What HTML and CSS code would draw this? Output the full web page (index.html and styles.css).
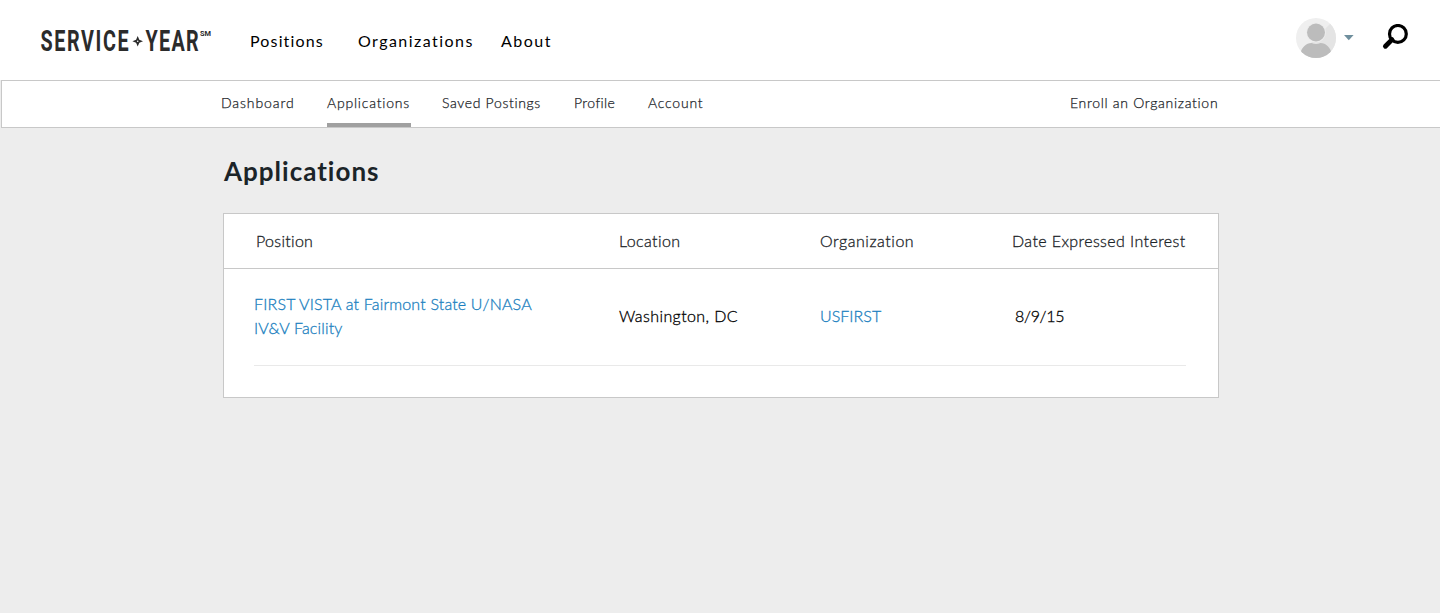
FILE: index.html
```html
<!DOCTYPE html>
<html lang="en">
<head>
<meta charset="utf-8">
<title>Applications</title>
<link rel="stylesheet" href="styles.css">
</head>
<body>
<header class="topbar">
  <a class="logo">
    <svg width="174" height="40" viewBox="0 -6 174 40">
      <g class="logo-word">
        <text transform="translate(.5 24.800) scale(.67 1)" textLength="131.500" lengthAdjust="spacing">SERVICE</text>
        <text transform="translate(105.500 24.800) scale(.67 1)" textLength="79.500" lengthAdjust="spacing">YEAR</text>
      </g>
      <path class="logo-star" fill-rule="evenodd" d="M97.700 10 L99.300 13.700 L103 15.200 L99.300 16.700 L97.700 20.400 L96.100 16.700 L92.400 15.200 L96.100 13.700 Z M97.700 14.400 A.8 .8 0 1 0 97.700 16 A.8 .8 0 1 0 97.700 14.400 Z"/>
      <text class="logo-mark" x="160" y="9.800" textLength="11" lengthAdjust="spacingAndGlyphs">SM</text>
    </svg>
  </a>
  <nav class="main-nav">
    <a class="nav-positions">Positions</a>
    <a class="nav-orgs">Organizations</a>
    <a class="nav-about">About</a>
  </nav>
  <div class="tools">
    <svg class="avatar" width="40" height="40" viewBox="0 0 40 40">
      <defs><clipPath id="disc"><circle cx="20" cy="20" r="20"/></clipPath></defs>
      <g clip-path="url(#disc)">
        <rect width="40" height="40" fill="#efefef"/>
        <path d="M40 0 V40 H0 Z" fill="#e4e4e4"/>
        <circle cx="20" cy="14.500" r="10" fill="#ededed"/>
        <circle cx="20" cy="14.500" r="9" fill="#bcbcbc"/>
        <path d="M4 36 C6 29 10 25 15.500 25 Q20 27 24.500 25 C30 25 34 29 36 36 V40 H4 Z" fill="#bcbcbc"/>
      </g>
    </svg>
    <svg class="caret" width="10" height="6" viewBox="0 0 10 6"><path d="M0 0 H9.600 L4.800 5.300 Z" fill="#6f8f9d"/></svg>
    <svg class="search" width="26" height="26" viewBox="0 0 26 26">
      <circle cx="15.900" cy="9.900" r="8.400" fill="none" stroke="#000" stroke-width="3.200"/>
      <path d="M10 15.600 L3.400 22.300" stroke="#000" stroke-width="4.800" stroke-linecap="round"/>
    </svg>
  </div>
</header>
<nav class="subbar">
  <div class="subnav">
    <a class="sub-dashboard">Dashboard</a>
    <a class="sub-applications active">Applications</a>
    <a class="sub-saved">Saved Postings</a>
    <a class="sub-profile">Profile</a>
    <a class="sub-account">Account</a>
    <a class="sub-enroll">Enroll an Organization</a>
  </div>
</nav>
<main class="content">
  <h1>Applications</h1>
  <section class="card">
    <div class="row head">
      <span class="h-position">Position</span>
      <span class="h-location">Location</span>
      <span class="h-org">Organization</span>
      <span class="h-date">Date Expressed Interest</span>
    </div>
    <div class="row item">
      <a class="position">FIRST VISTA at Fairmont State U/NASA<br>IV&amp;V Facility</a>
      <span class="location">Washington, DC</span>
      <a class="org">USFIRST</a>
      <span class="date">8/9/15</span>
    </div>
  </section>
</main>
</body>
</html>
```
FILE: styles.css
```css
* { box-sizing: border-box; }
body {
  margin: 0;
  min-height: 613px;
  background: #ededed;
  color: #1b2428;
  font-family: Lato, "Open Sans", sans-serif;
  font-variant-ligatures: none;
}
.topbar {
  display: flex;
  height: 80px;
  padding-left: 40px;
  background: #fff;
}
.logo { width: 210px; padding-top: 20px; }
.logo svg { display: block; overflow: visible; }
.logo-word {
  font: 700 29.5px Roboto, sans-serif;
  fill: #2b2b2b;
}
.logo-mark { font: 700 8px Roboto, sans-serif; fill: #2b2b2b; }
.logo-star { fill: #2b2b2b; }
.main-nav {
  display: grid;
  grid-template-columns: 108px 143px 1fr;
  flex: 1;
  padding-top: 31px;
  font-size: 16px;
  line-height: 20px;
  letter-spacing: 1.15px;
  color: #000;
}
.nav-orgs { letter-spacing: 1.45px; }
.nav-about { letter-spacing: 1.5px; }
.tools {
  display: flex;
  align-items: flex-start;
  width: 144px;
  padding-top: 18px;
}
.caret { margin: 17px 0 0 8px; }
.search { margin: 6px 0 0 28px; }
.subbar {
  height: 48px;
  margin-left: 1px;
  padding-left: 219px;
  background: #fff;
  border: 1px solid #c8c8c8;
  border-right: 0;
}
.subnav {
  display: grid;
  grid-template-columns: 106px 84px 31px 132px 74px 422px auto;
  grid-template-rows: 46px;
  height: 46px;
  font-size: 14px;
  font-weight: 300;
  line-height: 44px;
  letter-spacing: .8px;
  white-space: nowrap;
  -webkit-text-stroke: .25px;
}
.sub-dashboard { letter-spacing: .9px; }
.sub-saved { grid-column: 4; letter-spacing: .65px; }
.sub-profile { letter-spacing: .4px; }
.sub-enroll { letter-spacing: .7px; }
.active { border-bottom: 4px solid #a0a0a0; }
.content { width: 996px; margin-left: 223px; }
h1 {
  margin: 0;
  padding: 26px 0 0 1px;
  height: 85px;
  font-size: 26px;
  line-height: 34px;
  font-weight: 700;
  letter-spacing: 1px;
}
.card {
  height: 185px;
  background: #fff;
  border: 1px solid #c8c8c8;
}
.row {
  display: grid;
  align-items: center;
  font-size: 16px;
  font-weight: 300;
  line-height: 24px;
  letter-spacing: .4px;
  white-space: nowrap;
  -webkit-text-stroke: .3px;
}
.head {
  grid-template-columns: 363px 201px 192px auto;
  height: 55px;
  padding-left: 32px;
  border-bottom: 1px solid #c8c8c8;
}
.h-position { letter-spacing: .3px; }
.h-org { letter-spacing: .55px; }
.item {
  grid-template-columns: 365px 201px 195px auto;
  height: 97px;
  margin: 0 32px 0 30px;
  padding-bottom: 2px;
  border-bottom: 1px solid #e9e9e9;
  color: #000;
}
.item a { color: #1b7fc0; }
.position { letter-spacing: .17px; }
.org { letter-spacing: .05px; }
.date { letter-spacing: -.3px; }
```
